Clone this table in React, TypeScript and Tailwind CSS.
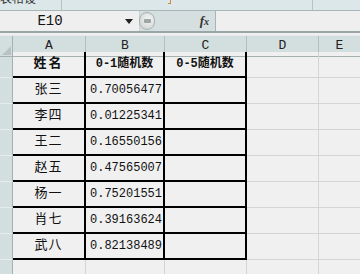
import React from 'react';

const mono = { fontFamily: '"Liberation Mono", "Noto Sans CJK SC", monospace' };
const cjk = { fontFamily: '"Liberation Mono", "Noto Sans CJK SC", sans-serif' };

const cols = ['A', 'B', 'C', 'D', 'E'];

const rows: [string, string][] = [
  ['张三', '0.70056477'],
  ['李四', '0.01225341'],
  ['王二', '0.16550156'],
  ['赵五', '0.47565007'],
  ['杨一', '0.75201551'],
  ['肖七', '0.39163624'],
  ['武八', '0.82138489'],
];

// widths of row header + columns A..E
const grid = 'grid grid-cols-[13px_73px_79px_82px_72px_1fr]';

function TableRow({ name, value, header }: { name: string; value: string; header?: boolean }) {
  const cell = 'h-[26px] box-border border-r-2 border-b-2 border-black flex items-center';
  return (
    <div className={grid}>
      <div className="h-[26px] box-border bg-[#d3dfdf] border-r border-r-[#a3b1b1] border-b border-b-[#e6eded]" />
      <div className={`${cell} justify-center text-[13px] text-[#111] ${header ? 'font-bold tracking-[2px]' : 'tracking-[1px]'}`} style={cjk}>
        {name}
      </div>
      <div className={`${cell} ${header ? 'justify-center font-bold' : 'pl-[4px]'} text-[12px] text-[#111]`} style={header ? cjk : mono}>
        {value}
      </div>
      <div className={`${cell} justify-center font-bold text-[12px] text-[#111]`} style={cjk}>
        {header ? '0-5随机数' : ''}
      </div>
      <div className="h-[26px] box-border border-r border-b border-[#d4d4d4]" />
      <div className="h-[26px] box-border border-b border-[#d4d4d4]" />
    </div>
  );
}

export default function App() {
  return (
    <div className="w-[360px] h-[274px] overflow-hidden bg-[#f0f0f0] select-none">
      {/* ribbon remnant */}
      <div className="h-[11px] flex bg-[#dce7ea] border-b border-[#a8b6b8] overflow-hidden">
        <div className="w-[62px] border-r border-r-[#b6c3c5] overflow-hidden">
          <div className="mt-[-8px] text-[12px] leading-[16px] text-[#333] whitespace-nowrap" style={cjk}>
            表格设
          </div>
        </div>
        <div className="w-[251px] border-r border-r-[#b6c3c5] relative">
          <div className="absolute left-[106px] top-0 w-[3px] h-[4px] border-r border-b border-[#d08a3a]" />
        </div>
        <div className="flex-1" />
      </div>

      {/* formula bar */}
      <div className="h-[22px] flex items-stretch border-b-2 border-[#98a6a6]">
        <div className="w-[140px] flex items-center bg-[#efefef] border-r border-r-[#c9d2d2]">
          <div className="w-[100px] text-center text-[14px] text-[#111]" style={mono}>E10</div>
          <div className="ml-[25px] w-0 h-0 border-l-[4px] border-r-[4px] border-t-[5px] border-l-transparent border-r-transparent border-t-[#222]" />
        </div>
        <div className="w-[76px] flex items-center bg-[#d5dfdf] border-r border-r-[#a9b4b4]">
          <div className="w-[16px] h-[18px] -ml-[1px] rounded-full border border-[#a9b2b2] bg-[radial-gradient(circle_at_60%_40%,#f6f6f6,#c9cccc)] flex items-center justify-center">
            <div className="w-[7px] h-[4px] bg-[#9ea5a5] rounded-[1px]" />
          </div>
          <div className="ml-auto mr-[6px] text-[13px] italic font-bold text-[#333]" style={{ fontFamily: '"Liberation Serif", serif' }}>
            f<span className="text-[10px]">x</span>
          </div>
        </div>
        <div className="flex-1 bg-[#efefef]" />
      </div>

      <div className="h-[2px]" />

      {/* column headers */}
      <div className={`${grid} h-[17px] bg-[#d3dfdf] border-t border-[#e4eaea]`}>
        <div className="box-border border-r border-b border-[#a3b1b1] relative">
          <svg className="absolute right-[1px] bottom-[1px]" width="9" height="9" viewBox="0 0 9 9">
            <polygon points="9,0 9,9 0,9" fill="#b9c3c3" />
          </svg>
        </div>
        {cols.map((c, i) => (
          <div
            key={c}
            className={`box-border border-b border-[#a3b1b1] flex items-center justify-center text-[13px] text-[#222] ${i < 4 ? 'border-r border-r-[#b3bfbf]' : ''}`}
            style={mono}
          >
            {c}
          </div>
        ))}
      </div>

      <TableRow header name="姓名" value="0-1随机数" />
      {rows.map(([n, v]) => (
        <TableRow key={n} name={n} value={v} />
      ))}

      {/* empty row */}
      <div className={grid}>
        <div className="h-[26px] box-border bg-[#d3dfdf] border-r border-r-[#a3b1b1]" />
        <div className="h-[26px] box-border border-r border-[#d4d4d4]" />
        <div className="h-[26px] box-border border-r border-[#d4d4d4]" />
        <div className="h-[26px] box-border border-r border-[#d4d4d4]" />
        <div className="h-[26px] box-border border-r border-[#d4d4d4]" />
        <div className="h-[26px]" />
      </div>
    </div>
  );
}
